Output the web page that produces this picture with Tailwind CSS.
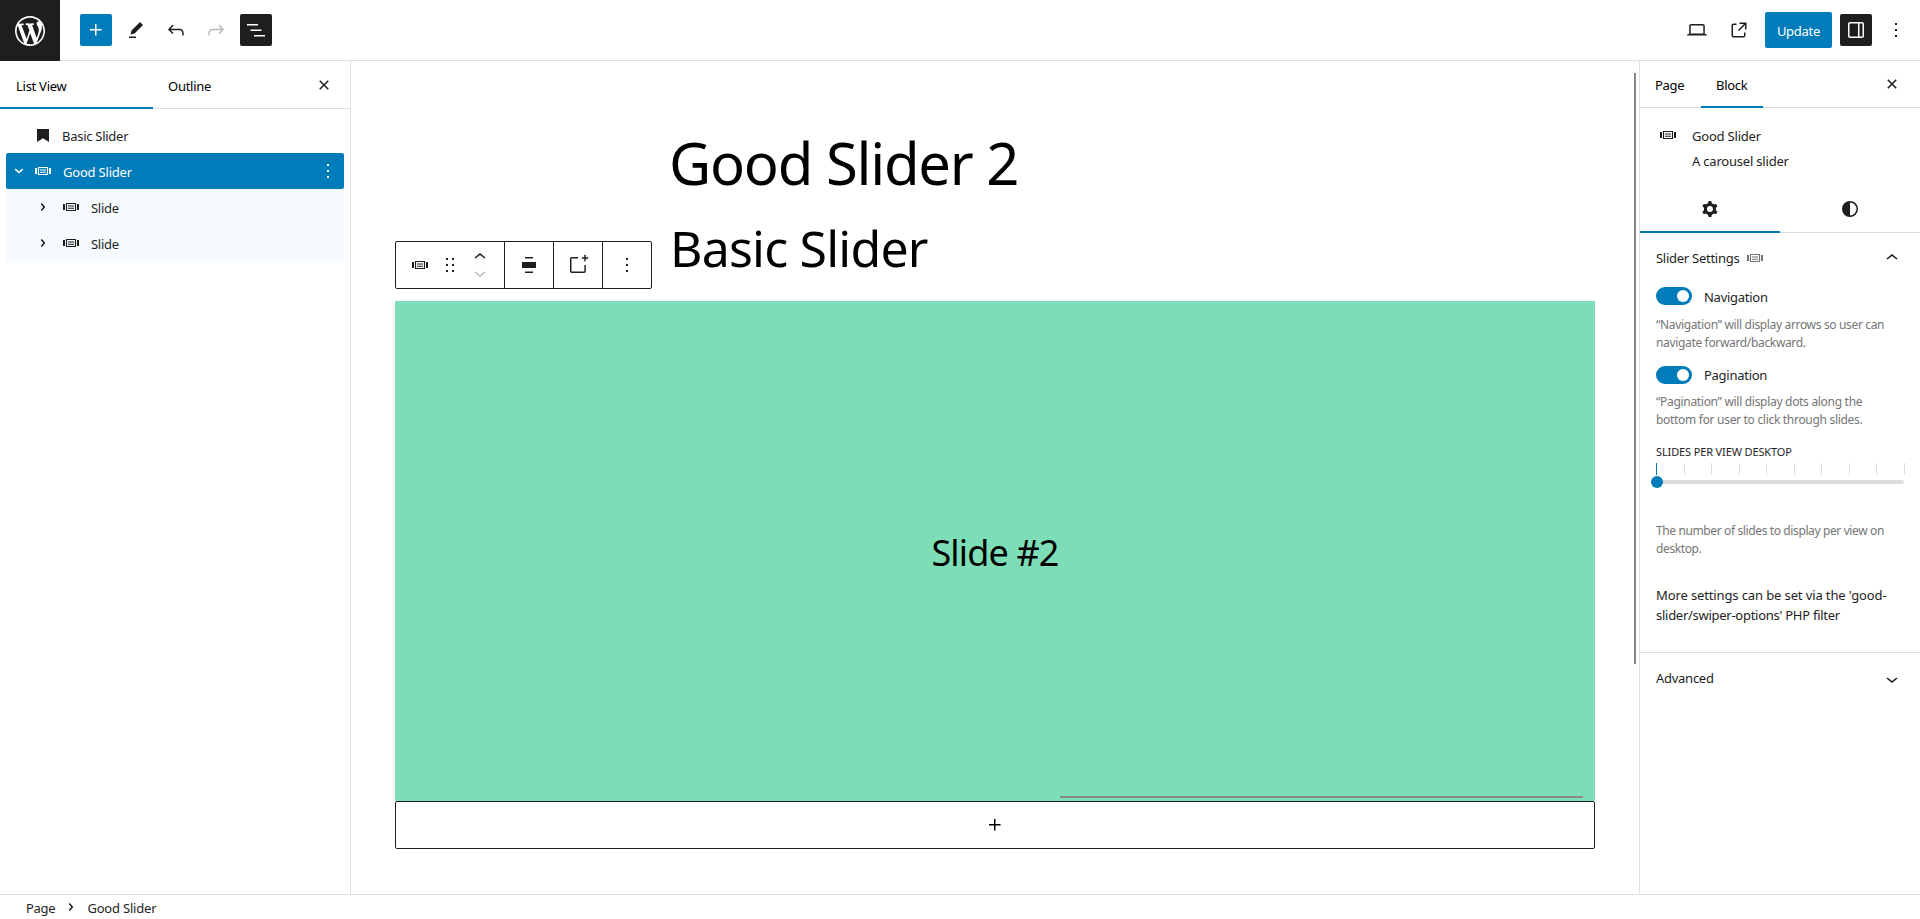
<!DOCTYPE html>
<html lang="en">
<head>
<meta charset="utf-8">
<title>Edit Page</title>
<script src="https://cdn.jsdelivr.net/npm/@tailwindcss/browser@4"></script>
</head>
<body class="flex h-[919px] w-[1920px] flex-col overflow-hidden bg-white font-['Noto_Sans',sans-serif] text-[13px] leading-5 tracking-[-0.27px] text-[#1e1e1e]">
<svg class="hidden">
  <symbol id="carousel" viewBox="0 0 16 9"><path fill="currentColor" d="M0 1h2v6H0zM14 1h2v6h-2z"/><path fill="none" stroke="currentColor" stroke-width="1.150" d="M3.500.5h9v7h-9zM5 3h6M5 5.200h6"/></symbol>
  <symbol id="close" viewBox="0 0 24 24"><path fill="currentColor" d="M12 13.06l3.712 3.713 1.061-1.06L13.061 12l3.712-3.712-1.06-1.06L12 10.938 8.288 7.227l-1.061 1.06L10.939 12l-3.712 3.712 1.06 1.061L12 13.061z"/></symbol>
  <symbol id="more" viewBox="0 0 24 24"><path fill="currentColor" d="M13 19h-2v-2h2v2zm0-6h-2v-2h2v2zm0-6h-2V5h2v2z"/></symbol>
  <symbol id="plus" viewBox="0 0 24 24"><path fill="currentColor" d="M11 12.5V17.5H12.5V12.5H17.5V11H12.5V6H11V11H6V12.5H11Z"/></symbol>
  <symbol id="right" viewBox="0 0 24 24"><path fill="currentColor" d="M10.862 8.04L14.28 12.03L10.862 16.017L9.723 15.04L12.305 12.03L9.723 9.017Z"/></symbol>
  <symbol id="up" viewBox="0 0 24 24"><path fill="currentColor" d="M6.5 12.4L12 8l5.5 4.4-.9 1.2L12 10l-4.5 3.6-1-1.2z"/></symbol>
  <symbol id="down" viewBox="0 0 24 24"><path fill="currentColor" d="M17.5 11.6L12 16l-5.5-4.4.9-1.2L12 14l4.5-3.6 1 1.2z"/></symbol>
</svg>

<header class="flex h-[61px] shrink-0 border-b border-[#e0e0e0]">
  <div class="flex h-[61px] w-[60px] items-center justify-center bg-[#1e1e1e] text-white">
    <svg class="size-[30px]" viewBox="0 0 20 20"><path fill="currentColor" d="M20 10c0-5.51-4.49-10-10-10C4.48 0 0 4.49 0 10c0 5.52 4.48 10 10 10 5.51 0 10-4.48 10-10zM7.78 15.37L4.37 6.22c.55-.02 1.17-.08 1.17-.08.5-.06.44-1.13-.06-1.11 0 0-1.45.11-2.37.11-.18 0-.37 0-.58-.01C4.12 2.69 6.87 1.11 10 1.11c2.33 0 4.45.87 6.05 2.34-.68-.11-1.65.39-1.65 1.58 0 .74.45 1.36.9 2.1.35.61.55 1.36.55 2.46 0 1.49-1.4 5-1.4 5l-3.03-8.37c.54-.02.82-.17.82-.17.5-.05.44-1.25-.06-1.22 0 0-1.44.12-2.38.12-.87 0-2.33-.12-2.33-.12-.5-.03-.56 1.2-.06 1.22l.92.08 1.26 3.41zM17.41 10c.24-.64.74-1.87.43-4.25.7 1.29 1.05 2.71 1.05 4.25 0 3.29-1.73 6.24-4.4 7.78.97-2.59 1.94-5.2 2.92-7.78zM6.1 18.09C3.12 16.65 1.11 13.53 1.11 10c0-1.3.23-2.48.72-3.59C3.25 10.3 4.67 14.2 6.1 18.09zm4.03-6.63l2.58 6.98c-.86.29-1.76.45-2.71.45-.79 0-1.57-.11-2.29-.33.81-2.38 1.62-4.74 2.42-7.1z"/></svg>
  </div>
  <div class="flex h-[60px] flex-1 items-center justify-between pl-5 pr-2">
    <div class="flex gap-2">
      <div class="flex size-8 items-center justify-center rounded-[2px] bg-[#007cba] text-white"><svg class="size-6"><use href="#plus"/></svg></div>
      <div class="flex size-8 items-center justify-center"><svg class="size-6" viewBox="0 0 24 24"><path fill="currentColor" d="m19 7-3-3-8.5 8.5-1 4 4-1L19 7Zm-7 11.5H5V20h7v-1.5Z"/></svg></div>
      <div class="flex size-8 items-center justify-center"><svg class="size-6" viewBox="0 0 24 24"><path fill="currentColor" d="M18.3 11.7c-.6-.6-1.4-.9-2.3-.9H6.7l2.9-3.3-1.1-1-4.5 5L8.5 16l1-1-2.7-2.7H16c.5 0 .9.2 1.3.5 1 1 1 3.4 1 4.5v.3h1.5v-.2c0-1.5 0-4.3-1.5-5.7z"/></svg></div>
      <div class="flex size-8 items-center justify-center text-[#bcbcbc]"><svg class="size-6" viewBox="0 0 24 24"><path fill="currentColor" d="M15.6 6.5l-1.1 1 2.9 3.3H8c-.9 0-1.7.3-2.3.9-1.4 1.5-1.4 4.2-1.4 5.6v.2h1.5v-.3c0-1.1 0-3.5 1-4.5.3-.3.7-.5 1.3-.5h9.2L14.5 15l1.1 1.1 4.6-4.6-4.6-5z"/></svg></div>
      <div class="flex size-8 items-center justify-center rounded-[2px] bg-[#1e1e1e] text-white"><svg class="size-6" viewBox="0 0 24 24"><path fill="currentColor" d="M3 6h11v1.5H3V6Zm3.5 5.5h11V13h-11v-1.5ZM21 17H10v1.5h11V17Z"/></svg></div>
    </div>
    <div class="flex items-center gap-2">
      <div class="mr-[10px] flex"><svg class="size-6" viewBox="0 0 24 24"><path fill="currentColor" d="M20.5 16h-.7V8c0-1.1-.9-2-2-2H6.2c-1.1 0-2 .9-2 2v8h-.7c-.8 0-1.5.7-1.5 1.5h20c0-.8-.7-1.5-1.5-1.5zM5.7 8c0-.3.2-.5.5-.5h11.6c.3 0 .5.2.5.5v7.6H5.7V8z"/></svg></div>
      <div class="mr-1.5 flex"><svg class="size-6" viewBox="0 0 24 24"><path fill="currentColor" d="M19.5 4.5h-7V6h4.44l-5.97 5.97 1.06 1.06L18 7.06v4.44h1.5v-7Zm-13 1a2 2 0 0 0-2 2v10a2 2 0 0 0 2 2h10a2 2 0 0 0 2-2v-3H17v3a.5.5 0 0 1-.5.5h-10a.5.5 0 0 1-.5-.5v-10a.5.5 0 0 1 .5-.5h3V5.500h-3Z"/></svg></div>
      <div class="flex h-9 w-[67px] items-center justify-center rounded-[2px] bg-[#007cba] pt-0.5 text-white">Update</div>
      <div class="flex size-8 items-center justify-center rounded-[2px] bg-[#1e1e1e] text-white"><svg class="size-6" viewBox="0 0 24 24"><path fill="currentColor" fill-rule="evenodd" d="M18 4H6c-1.1 0-2 .9-2 2v12c0 1.100.9 2 2 2h12c1.100 0 2-.9 2-2V6c0-1.100-.9-2-2-2zm-4 14.500H6c-.3 0-.5-.2-.5-.5V6c0-.3.2-.5.5-.5h8v13zm4.500-.5c0 .3-.2.5-.5.5h-2.500v-13H18c.3 0 .5.2.5.5v12z"/></svg></div>
      <div class="flex size-8 items-center justify-center"><svg class="size-6"><use href="#more"/></svg></div>
    </div>
  </div>
</header>

<div class="flex h-[833px] shrink-0">
  <aside class="w-[351px] shrink-0 border-r border-[#e0e0e0]">
    <div class="flex h-12 border-b border-[#ddd]">
      <div class="h-12 w-[153px] border-b-2 border-[#007cba] pl-4 pt-[15px] text-black">List View</div>
      <div class="flex-1 pl-[15px] pt-[15px] text-black">Outline</div>
      <svg class="mr-3.5 mt-3 size-6"><use href="#close"/></svg>
    </div>
    <div class="px-1.5 pt-2">
      <div class="flex h-9 items-center"><svg class="ml-[31px] h-[13px] w-3" viewBox="0 0 12 13"><path fill="currentColor" d="M0 0h12v13L6 9.200 0 13z"/></svg><span class="ml-[13px] pt-0.5">Basic Slider</span></div>
      <div class="flex h-9 items-center rounded-[2px] bg-[#007cba] text-white"><svg class="ml-[3px] h-5 w-5" viewBox="0 0 20 20"><path fill="none" stroke="currentColor" stroke-width="1.600" d="M6.200 8.200l3.800 3.300 3.800-3.300"/></svg><svg class="ml-1.5 h-[9px] w-4"><use href="#carousel"/></svg><span class="ml-3 flex-1 pt-0.5 tracking-[-0.200px]">Good Slider</span><svg class="mr-1 size-6"><use href="#more"/></svg></div>
      <div class="flex h-9 items-center bg-[#f5fafd]"><svg class="ml-[25px] size-6"><use href="#right"/></svg><svg class="ml-2 h-[9px] w-4"><use href="#carousel"/></svg><span class="ml-3 pt-0.5">Slide</span></div>
      <div class="flex h-9 items-center bg-[#f5fafd]"><svg class="ml-[25px] size-6"><use href="#right"/></svg><svg class="ml-2 h-[9px] w-4"><use href="#carousel"/></svg><span class="ml-3 pt-0.5">Slide</span></div>
    </div>
  </aside>

  <main class="relative flex flex-1 flex-col px-11 text-black">
    <h1 class="ml-[274px] mt-[62px] h-[80px] text-[58px] leading-[80px] tracking-[-1.250px]">Good Slider 2</h1>
    <h2 class="ml-[275px] mt-[10px] h-[70px] text-[50px] leading-[70px] tracking-[-0.800px]">Basic Slider</h2>
    <div class="relative mt-[18px] flex h-[500px] items-center justify-center bg-[#7dddb6]">
      <span class="pt-1 text-[36px] leading-[50px] tracking-[-0.850px]">Slide #2</span>
      <div class="absolute bottom-[3px] right-3 h-0.5 w-[523px] bg-[#898989]"></div>
    </div>
    <div class="z-10 flex h-12 items-center justify-center rounded-[2px] bg-white outline-1 -outline-offset-1 outline-[#1e1e1e]"><svg class="size-6"><use href="#plus"/></svg></div>
    <div class="absolute left-11 top-[180px] flex h-12 w-[257px] rounded-[2px] border border-[#1e1e1e] bg-white text-[#1e1e1e]">
      <div class="flex w-[109px] items-center border-r border-[#1e1e1e]">
        <svg class="ml-4 h-[9px] w-4"><use href="#carousel"/></svg>
        <svg class="ml-2.5 size-6" viewBox="0 0 24 24"><path fill="currentColor" d="M8 7h2V5H8v2zm0 6h2v-2H8v2zm0 6h2v-2H8v2zm6-14v2h2V5h-2zm0 8h2v-2h-2v2zm0 6h2v-2h-2v2z"/></svg>
        <div class="ml-[6px] flex flex-col"><svg class="-mb-2 size-6"><use href="#up"/></svg><svg class="size-6 text-[#bcbcbc]"><use href="#down"/></svg></div>
      </div>
      <div class="flex w-[49px] items-center justify-center border-r border-[#1e1e1e]"><svg class="size-6" viewBox="0 0 24 24"><path fill="currentColor" d="M16 5.500H8V4h8v1.500ZM16 20H8v-1.500h8V20ZM5 9h14v6H5V9Z"/></svg></div>
      <div class="flex w-[49px] items-center justify-center border-r border-[#1e1e1e]"><svg class="size-6" viewBox="0 0 24 24"><path fill="none" stroke="currentColor" stroke-width="1.500" d="M12 4.800H5.700a1 1 0 0 0-1 1v12.400a1 1 0 0 0 1 1h12.400a1 1 0 0 0 1-1V12M19 1.800v6.400M15.800 5h6.400"/></svg></div>
      <div class="flex flex-1 items-center justify-center"><svg class="size-6"><use href="#more"/></svg></div>
    </div>
    <div class="absolute right-[3px] top-3 h-[591px] w-0.5 bg-[#858585]"></div>
  </main>

  <aside class="w-[281px] shrink-0 border-l border-[#e0e0e0]">
    <div class="flex h-[47px] border-b border-[#ddd] text-black">
      <div class="w-[61px] pl-[15px] pt-3.5">Page</div>
      <div class="h-[47px] w-[62px] border-b-2 border-[#007cba] pl-[15px] pt-3.5">Block</div>
      <svg class="ml-auto mr-4 mt-[11px] size-6 text-[#1e1e1e]"><use href="#close"/></svg>
    </div>
    <div class="flex h-[77px] pl-5">
      <svg class="mt-[23px] h-[9px] w-4"><use href="#carousel"/></svg>
      <div class="ml-4 pt-[18px] tracking-[-0.200px]"><div>Good Slider</div><div class="mt-[5px]">A carousel slider</div></div>
    </div>
    <div class="flex h-[48px] border-b border-[#ddd]">
      <div class="flex h-[48px] w-[140px] items-center justify-center border-b-2 border-[#007cba] pt-px"><svg class="size-6" viewBox="0 0 24 24"><path fill="currentColor" fill-rule="evenodd" d="M10.289 4.836A1 1 0 0111.275 4h1.306a1 1 0 01.987.836l.244 1.466c.787.26 1.503.679 2.108 1.218l1.393-.522a1 1 0 011.216.437l.653 1.130a1 1 0 01-.23 1.273l-1.148.944a6.025 6.025 0 010 2.435l1.149.946a1 1 0 01.23 1.272l-.653 1.130a1 1 0 01-1.216.437l-1.394-.522c-.605.54-1.320.958-2.108 1.218l-.244 1.466a1 1 0 01-.987.836h-1.306a1 1 0 01-.986-.836l-.244-1.466a5.995 5.995 0 01-2.108-1.218l-1.394.522a1 1 0 01-1.217-.436l-.653-1.131a1 1 0 01.23-1.272l1.149-.946a6.026 6.026 0 010-2.435l-1.148-.944a1 1 0 01-.23-1.272l.653-1.131a1 1 0 011.217-.437l1.393.522a5.994 5.994 0 012.108-1.218l.244-1.466zM14.929 12a3 3 0 11-6 0 3 3 0 016 0z"/></svg></div>
      <div class="flex h-[48px] w-[140px] items-center justify-center"><svg class="size-6" viewBox="0 0 24 24"><path fill="currentColor" fill-rule="evenodd" d="M20 12a8 8 0 1 1-16 0 8 8 0 0 1 16 0Zm-1.500 0a6.500 6.500 0 0 1-6.500 6.500v-13a6.500 6.500 0 0 1 6.500 6.500Z"/></svg></div>
    </div>
    <section class="h-[420px] border-b border-[#e0e0e0] px-4 pt-[15px]">
      <div class="flex h-5 items-center"><span>Slider Settings</span><svg class="ml-2 h-[9px] w-4 text-[#757575]"><use href="#carousel"/></svg><svg class="ml-auto size-6"><use href="#up"/></svg></div>
      <div class="mt-[19px] flex h-[18px] items-center"><span class="flex h-[18px] w-9 items-center justify-end rounded-full bg-[#007cba] pr-[3px]"><span class="size-3 rounded-full bg-white"></span></span><span class="ml-3 pt-0.5">Navigation</span></div>
      <p class="mt-[11px] whitespace-nowrap text-[12px] leading-[18px] tracking-[-0.340px] text-[#757575]">“Navigation” will display arrows so user can<br>navigate forward/backward.</p>
      <div class="mt-[14px] flex h-[18px] items-center"><span class="flex h-[18px] w-9 items-center justify-end rounded-full bg-[#007cba] pr-[3px]"><span class="size-3 rounded-full bg-white"></span></span><span class="ml-3">Pagination</span></div>
      <p class="mt-[9px] whitespace-nowrap text-[12px] leading-[18px] tracking-[-0.300px] text-[#757575]">“Pagination” will display dots along the<br>bottom for user to click through slides.</p>
      <div class="mt-[15px] h-4 whitespace-nowrap text-[11px] leading-4 tracking-[-0.130px]">SLIDES PER VIEW DESKTOP</div>
      <div class="mt-[3px] flex h-3 w-[249px] justify-between"><i class="w-px bg-[#007cba]"></i><i class="w-px bg-[#ddd]"></i><i class="w-px bg-[#ddd]"></i><i class="w-px bg-[#ddd]"></i><i class="w-px bg-[#ddd]"></i><i class="w-px bg-[#ddd]"></i><i class="w-px bg-[#ddd]"></i><i class="w-px bg-[#ddd]"></i><i class="w-px bg-[#ddd]"></i><i class="w-px bg-[#ddd]"></i></div>
      <div class="mt-[5px] flex h-1 items-center rounded-full bg-[#ddd]"><span class="-ml-[5px] size-3 rounded-full bg-[#007cba]"></span></div>
      <p class="mt-[38px] whitespace-nowrap text-[12px] leading-[18px] tracking-[-0.380px] text-[#757575]">The number of slides to display per view on<br>desktop.</p>
      <p class="mt-[27px] whitespace-nowrap tracking-[-0.120px]">More settings can be set via the 'good-<br><span class="tracking-[-0.270px]">slider/swiper-options' PHP filter</span></p>
    </section>
    <div class="flex h-[52px] items-center justify-between px-4"><span class="pb-0.5">Advanced</span><svg class="size-6"><use href="#down"/></svg></div>
  </aside>
</div>

<footer class="flex flex-1 items-center border-t border-[#e0e0e0] pl-[26px]">
  <span class="pt-0.5">Page</span><svg class="ml-1 size-6"><use href="#right"/></svg><span class="ml-1 pt-0.5 tracking-[-0.200px]">Good Slider</span>
</footer>
</body>
</html>
